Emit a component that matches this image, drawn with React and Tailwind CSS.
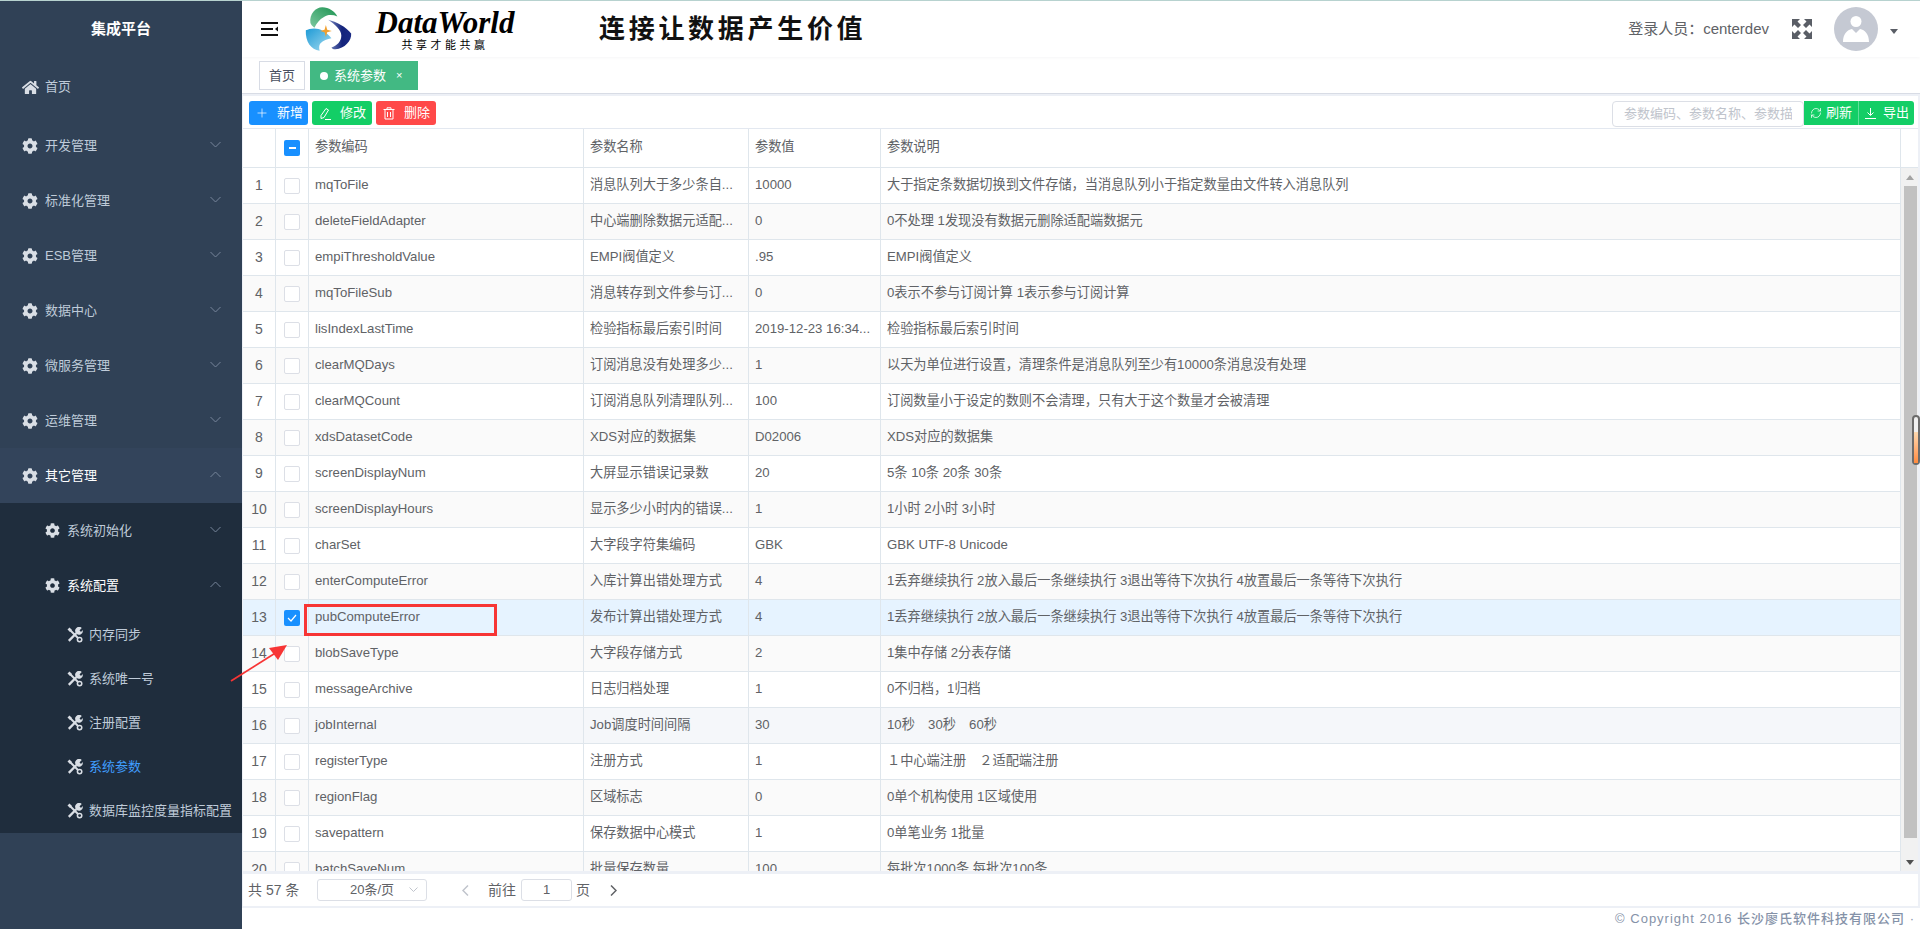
import React from "react";
import { FaCog, FaHome } from "react-icons/fa";
import { Plus, RefreshCw } from "lucide-react";

const rows = [
  ["mqToFile", "消息队列大于多少条自...", "10000", "大于指定条数据切换到文件存储，当消息队列小于指定数量由文件转入消息队列"],
  ["deleteFieldAdapter", "中心端删除数据元适配...", "0", "0不处理 1发现没有数据元删除适配端数据元"],
  ["empiThresholdValue", "EMPI阀值定义", ".95", "EMPI阀值定义"],
  ["mqToFileSub", "消息转存到文件参与订...", "0", "0表示不参与订阅计算 1表示参与订阅计算"],
  ["lisIndexLastTime", "检验指标最后索引时间", "2019-12-23 16:34...", "检验指标最后索引时间"],
  ["clearMQDays", "订阅消息没有处理多少...", "1", "以天为单位进行设置，清理条件是消息队列至少有10000条消息没有处理"],
  ["clearMQCount", "订阅消息队列清理队列...", "100", "订阅数量小于设定的数则不会清理，只有大于这个数量才会被清理"],
  ["xdsDatasetCode", "XDS对应的数据集", "D02006", "XDS对应的数据集"],
  ["screenDisplayNum", "大屏显示错误记录数", "20", "5条 10条 20条 30条"],
  ["screenDisplayHours", "显示多少小时内的错误...", "1", "1小时 2小时 3小时"],
  ["charSet", "大字段字符集编码", "GBK", "GBK UTF-8 Unicode"],
  ["enterComputeError", "入库计算出错处理方式", "4", "1丢弃继续执行 2放入最后一条继续执行 3退出等待下次执行 4放置最后一条等待下次执行"],
  ["pubComputeError", "发布计算出错处理方式", "4", "1丢弃继续执行 2放入最后一条继续执行 3退出等待下次执行 4放置最后一条等待下次执行"],
  ["blobSaveType", "大字段存储方式", "2", "1集中存储 2分表存储"],
  ["messageArchive", "日志归档处理", "1", "0不归档，1归档"],
  ["jobInternal", "Job调度时间间隔", "30", "10秒　30秒　60秒"],
  ["registerType", "注册方式", "1", "１中心端注册　２适配端注册"],
  ["regionFlag", "区域标志", "0", "0单个机构使用 1区域使用"],
  ["savepattern", "保存数据中心模式", "1", "0单笔业务 1批量"],
  ["batchSaveNum", "批量保存数量", "100", "每批次1000条 每批次100条"],
];

const Chevron = ({ up }) => (
  <svg width="11" height="7" viewBox="0 0 11 7" fill="none" stroke="#77859a" strokeWidth="1" className="absolute left-[210px] top-1/2 -mt-[5px]">
    <polyline points={up ? "0.5,6 5.5,1 10.5,6" : "0.5,1 5.5,6 10.5,1"} />
  </svg>
);

const ToolsIcon = () => (
  <svg width="16" height="16" viewBox="0 0 16 16" className="mr-[6px] shrink-0" fill="none" stroke="#d9dee5">
    <line x1="3" y1="3" x2="11" y2="11" strokeWidth="2" />
    <path d="M0.5 2.5L2.5 0.5L5 3L3 5Z" fill="#d9dee5" stroke="none" />
    <circle cx="12.6" cy="12.6" r="2.2" strokeWidth="1.5" />
    <line x1="9.5" y1="6" x2="1.8" y2="13.8" strokeWidth="2.4" />
    <path d="M14.8 1L12.6 3.2L13.2 4.4L14.6 4.6L15.6 3A3.6 3.6 0 0 1 9.4 6.4A3.6 3.6 0 0 1 14.8 1Z" fill="#d9dee5" stroke="none" />
  </svg>
);

const MenuItem = ({ label, up, active }) => (
  <div className={`relative flex h-[55px] items-center pl-[22px] ${active ? "bg-[#33445b] text-white" : "text-[#bfcbd9]"}`}>
    <FaCog className="mr-[7px] w-[16px] h-[16px] text-[#d9dee5]" />
    <span>{label}</span>
    <Chevron up={up} />
  </div>
);

const SubMenu = ({ label, up, active }) => (
  <div className={`relative flex h-[55px] items-center pl-[45px] ${active ? "text-white" : "text-[#bfcbd9]"}`}>
    <FaCog className="mr-[7px] w-[15px] h-[15px] text-[#d9dee5]" />
    <span>{label}</span>
    <Chevron up={up} />
  </div>
);

const Leaf = ({ label, active }) => (
  <div className={`flex h-[44px] items-center pl-[67px] ${active ? "text-[#409eff]" : "text-[#bfcbd9]"}`}>
    <ToolsIcon />
    <span className="whitespace-nowrap">{label}</span>
  </div>
);

const Sidebar = () => (
  <div className="w-[242px] shrink-0 bg-[#304156] text-[13px]">
    <div className="flex h-[57px] items-center justify-center text-[15px] font-bold text-white">集成平台</div>
    <div className="flex h-[58px] items-center pl-[22px] text-[#bfcbd9] mb-[2px]">
      <FaHome className="mr-[6px] w-[17px] h-[17px] text-[#d9dee5]" />
      <span>首页</span>
    </div>
    <MenuItem label="开发管理" />
    <MenuItem label="标准化管理" />
    <MenuItem label="ESB管理" />
    <MenuItem label="数据中心" />
    <MenuItem label="微服务管理" />
    <MenuItem label="运维管理" />
    <MenuItem label="其它管理" up active />
    <div className="bg-[#1f2d3d]">
      <SubMenu label="系统初始化" />
      <SubMenu label="系统配置" up active />
      <Leaf label="内存同步" />
      <Leaf label="系统唯一号" />
      <Leaf label="注册配置" />
      <Leaf label="系统参数" active />
      <Leaf label="数据库监控度量指标配置" />
    </div>
  </div>
);

const Logo = () => (
  <svg width="47" height="46" viewBox="30 10 142 140">
    <defs>
      <linearGradient id="g1" x1="0" y1="1" x2="1" y2="0">
        <stop offset="0" stopColor="#7cc8a0" />
        <stop offset="1" stopColor="#1c9350" />
      </linearGradient>
      <linearGradient id="g2" x1="0" y1="0" x2="1" y2="1">
        <stop offset="0" stopColor="#1d9ad6" />
        <stop offset="1" stopColor="#a6dcf0" />
      </linearGradient>
      <linearGradient id="g3" x1="0" y1="0" x2="1" y2="0">
        <stop offset="0" stopColor="#7f8fc4" />
        <stop offset="0.6" stopColor="#14247c" />
        <stop offset="1" stopColor="#1a2a84" />
      </linearGradient>
    </defs>
    <path d="M46 62C42 34 62 14 82 14c20 0 38 12 46 28c-14-6-30-6-42 2c-12 7-20 16-28 32c-6-4-10-8-12-14Z" fill="url(#g1)" />
    <path d="M32 84c12-6 34-10 52 2c10 6 20 14 26 22c-12 2-26 6-34 16c-4 6-4 14-2 22C48 144 30 118 32 84Z" fill="url(#g2)" />
    <path d="M100 52c24 6 56 22 70 42c2 22-20 46-48 48c-6 0-10-2-12-6c16-4 30-18 30-36c0-18-20-34-40-48Z" fill="url(#g3)" />
    <path d="M93 68l4 14l14 4l-14 4l-4 14l-4-14l-14-4l14-4Z" fill="#f0a030" />
  </svg>
);

const Header = () => (
  <div className="relative z-10 flex h-[56px] shrink-0 items-center bg-white pl-[18px] pr-[22px] shadow-[0_1px_3px_rgba(0,21,41,0.04)]">
    <svg width="18" height="16" viewBox="0 0 18 16" fill="none" stroke="#111" strokeWidth="2">
      <line x1="1" y1="2" x2="18" y2="2" />
      <line x1="1" y1="8" x2="13" y2="8" />
      <line x1="1" y1="14" x2="18" y2="14" />
      <path d="M18 5.5L15 8L18 10.5Z" fill="#111" stroke="none" />
    </svg>
    <div className="ml-[27px]">
      <Logo />
    </div>
    <div className="ml-[22px] flex w-[142px] flex-col items-center text-black">
      <span className="font-['Liberation_Serif','Noto_Sans_CJK_SC',serif] text-[31px] leading-[31px] font-bold italic whitespace-nowrap">DataWorld</span>
      <span className="mt-[1px] text-[11px] leading-[13px] tracking-[3.5px] whitespace-nowrap">共享才能共赢</span>
    </div>
    <div className="ml-[83px] text-[26px] leading-[30px] font-bold tracking-[3.7px] text-[#111] whitespace-nowrap">连接让数据产生价值</div>
    <div className="ml-auto flex items-center">
      <span className="text-[15px] text-[#606266]">登录人员：centerdev</span>
      <svg width="20" height="20" viewBox="0 0 20 20" fill="#5a5e66" className="ml-[23px]">
        <path d="M0 0H8L5.5 2.5L9 6L6 9L2.5 5.5L0 8Z" />
        <path d="M20 0H12L14.5 2.5L11 6L14 9L17.5 5.5L20 8Z" />
        <path d="M0 20H8L5.5 17.5L9 14L6 11L2.5 14.5L0 12Z" />
        <path d="M20 20H12L14.5 17.5L11 14L14 11L17.5 14.5L20 12Z" />
      </svg>
      <div className="ml-[22px] flex h-[44px] w-[44px] items-center justify-center rounded-full bg-[#c5c9d3]">
        <svg width="26" height="28" viewBox="0 0 26 28" fill="#fff">
          <circle cx="13" cy="6.5" r="5.5" />
          <path d="M0 27C0 19 4 15 9 14L13 18L17 14C22 15 26 19 26 27Z" />
        </svg>
      </div>
      <svg width="8" height="5" viewBox="0 0 8 5" fill="#5a5e66" className="ml-[12px] mt-[5px]">
        <path d="M0 0H8L4 5Z" />
      </svg>
    </div>
  </div>
);

const Tabs = () => (
  <div className="flex h-[37px] shrink-0 items-start border-b border-[#d8dce5] bg-white pl-[17px] pt-[4px] text-[13px]">
    <div className="flex h-[29px] w-[46px] items-center justify-center border border-[#d8dce5] text-[#495060]">首页</div>
    <div className="ml-[5px] flex h-[29px] w-[108px] items-center bg-[#42b983] pl-[10px] text-white">
      <span className="h-[8px] w-[8px] rounded-full bg-white" />
      <span className="ml-[6px]">系统参数</span>
      <span className="ml-[10px] text-[11px]">×</span>
    </div>
  </div>
);

const ToolButton = ({ color, icon, label, width }) => (
  <div className={`flex h-[24px] items-center rounded-[3px] pl-[6px] text-[13px] text-white ${color} ${width}`}>
    <span className="flex w-[14px] items-center justify-center">{icon}</span>
    <span className="ml-[8px]">{label}</span>
  </div>
);

const Toolbar = () => (
  <div className="ml-[1px] mr-[2px] flex h-[33px] shrink-0 items-start border-b border-[#e3e8f0] bg-white pl-[6px] pt-[5px]">
    <div className="flex gap-[4px]">
      <ToolButton color="bg-[#1890ff]" width="w-[59px]" label="新增" icon={<Plus size={14} strokeWidth={1.2} />} />
      <ToolButton
        color="bg-[#13ce66]"
        width="w-[60px]"
        label="修改"
        icon={
          <svg width="12" height="13" viewBox="0 0 12 13" fill="none" stroke="#fff" strokeWidth="1">
            <path d="M2 8.5L7 1.5L9.5 3L5 10.5L2 11.5Z" />
            <line x1="6" y1="12.5" x2="12" y2="12.5" />
          </svg>
        }
      />
      <ToolButton
        color="bg-[#ff4949]"
        width="w-[60px]"
        label="删除"
        icon={
          <svg width="12" height="13" viewBox="0 0 12 13" fill="none" stroke="#fff" strokeWidth="1">
            <line x1="0.5" y1="2.5" x2="11.5" y2="2.5" />
            <path d="M4 2.5V0.8H8V2.5" />
            <path d="M2 2.5V12H10V2.5" />
            <line x1="4.5" y1="5" x2="4.5" y2="10" />
            <line x1="7.5" y1="5" x2="7.5" y2="10" />
          </svg>
        }
      />
    </div>
    <div className="ml-auto flex mr-[4px]">
      <div className="h-[26px] w-[192px] overflow-hidden rounded-[4px] border border-[#dcdfe6] pl-[11px] pr-[11px] text-[13px] leading-[24px] whitespace-nowrap text-[#c0c4cc]">
        <div className="overflow-hidden">参数编码、参数名称、参数描述</div>
      </div>
      <div className="flex h-[24px] items-center bg-[#13ce66] rounded-r-[3px] text-[13px] text-white">
        <div className="flex h-[24px] w-[55px] items-center border-r border-[#5fe09a] pl-[6px]">
          <RefreshCw size={12} strokeWidth={1.5} />
          <span className="ml-[4px]">刷新</span>
        </div>
        <div className="flex h-[24px] w-[55px] items-center pl-[6px]">
          <svg width="11" height="11" viewBox="0 0 11 11" fill="none" stroke="#fff" strokeWidth="1">
            <line x1="5.5" y1="0" x2="5.5" y2="7" />
            <polyline points="2.5,4.5 5.5,7.5 8.5,4.5" />
            <line x1="0" y1="10.5" x2="11" y2="10.5" />
          </svg>
          <span className="ml-[7px]">导出</span>
        </div>
      </div>
    </div>
  </div>
);

const Checkbox = ({ state }) => {
  if (state === "some")
    return (
      <span className="flex h-[16px] w-[16px] items-center justify-center rounded-[2px] bg-[#1890ff]">
        <span className="h-[2px] w-[7px] bg-white" />
      </span>
    );
  if (state === "on")
    return (
      <span className="flex h-[16px] w-[16px] items-center justify-center rounded-[2px] bg-[#1890ff]">
        <svg width="10" height="8" viewBox="0 0 10 8" fill="none" stroke="#fff" strokeWidth="1.2">
          <polyline points="1,4 4,7 9,1" />
        </svg>
      </span>
    );
  return <span className="h-[16px] w-[16px] rounded-[2px] border border-[#dcdfe6] bg-white" />;
};

const cell = "flex items-center border-r border-[#dfe6ec] shrink-0 px-[6px] overflow-hidden whitespace-nowrap";

const Row = ({ row, index }) => {
  const n = index + 1;
  let bg = n % 2 === 0 ? "bg-[#fafafa]" : "bg-white";
  if (n === 13) bg = "bg-[#e6f3ff]";
  if (n === 16) bg = "bg-[#f5f7fa]";
  return (
    <div className={`flex h-[36px] shrink-0 border-b border-[#dfe6ec] ${bg}`}>
      <div className="flex w-[33px] shrink-0 items-center justify-center border-r border-[#dfe6ec] pb-[1px] text-[14px]">{n}</div>
      <div className="flex w-[33px] shrink-0 items-center justify-center border-r border-[#dfe6ec]">
        <Checkbox state={n === 13 ? "on" : "off"} />
      </div>
      <div className={`${cell} pb-[1px] w-[275px]`}>{row[0]}</div>
      <div className={`${cell} pb-[1px] w-[165px]`}>{row[1]}</div>
      <div className={`${cell} pb-[1px] w-[132px]`}>{row[2]}</div>
      <div className="flex flex-1 items-center overflow-hidden px-[6px] pb-[1px] whitespace-nowrap">{row[3]}</div>
    </div>
  );
};

const DataTable = () => (
  <div className="ml-[1px] mr-[2px] flex min-h-0 flex-1 flex-col bg-white text-[13.2px] text-[#606266]">
    <div className="flex h-[39px] shrink-0 border-b border-[#dfe6ec]">
      <div className="w-[33px] shrink-0 border-r border-[#dfe6ec]" />
      <div className="flex w-[33px] shrink-0 items-center justify-center border-r border-[#dfe6ec]">
        <Checkbox state="some" />
      </div>
      <div className={`${cell} pb-[2px] w-[275px]`}>参数编码</div>
      <div className={`${cell} pb-[2px] w-[165px]`}>参数名称</div>
      <div className={`${cell} pb-[2px] w-[132px]`}>参数值</div>
      <div className={`${cell} pb-[2px] w-[1020px]`}>参数说明</div>
    </div>
    <div className="flex min-h-0 flex-1">
      <div className="flex w-[1658px] shrink-0 flex-col overflow-hidden border-r border-[#dfe6ec]">
        {rows.map((row, i) => (
          <Row key={row[0]} row={row} index={i} />
        ))}
      </div>
      <div className="flex flex-1 flex-col items-center bg-[#f1f1f1] pl-[1px]">
        <div className="flex h-[18px] items-center">
          <svg width="8" height="5" viewBox="0 0 8 5" fill="#a3a3a3">
            <path d="M4 0L8 5H0Z" />
          </svg>
        </div>
        <div className="h-[652px] w-[13px] bg-[#c1c1c1]" />
        <div className="mt-auto flex h-[18px] items-center">
          <svg width="8" height="5" viewBox="0 0 8 5" fill="#505050">
            <path d="M0 0H8L4 5Z" />
          </svg>
        </div>
      </div>
    </div>
  </div>
);

const Pagination = () => (
  <div className="ml-[1px] mr-[2px] mt-[3px] flex h-[32px] shrink-0 items-center bg-white pl-[5px] text-[14px] text-[#606266]">
    <span className="w-[52px] whitespace-nowrap">共 57 条</span>
    <div className="relative ml-[17px] flex h-[22px] w-[110px] items-center justify-center rounded-[3px] border border-[#dcdfe6] text-[13px]">
      <span>20条/页</span>
      <svg width="9" height="5" viewBox="0 0 9 5" fill="none" stroke="#c0c4cc" className="absolute right-[8px] top-[7px]">
        <polyline points="0.5,0.5 4.5,4.5 8.5,0.5" />
      </svg>
    </div>
    <svg width="7" height="11" viewBox="0 0 7 11" fill="none" stroke="#c0c4cc" strokeWidth="1.5" className="ml-[35px]">
      <polyline points="6,0.5 1,5.5 6,10.5" />
    </svg>
    <span className="ml-[19px]">前往</span>
    <div className="ml-[5px] flex h-[22px] w-[51px] items-center justify-center rounded-[3px] border border-[#dcdfe6] text-[13px]">1</div>
    <span className="ml-[4px]">页</span>
    <svg width="7" height="11" viewBox="0 0 7 11" fill="none" stroke="#606266" strokeWidth="1.5" className="ml-[20px]">
      <polyline points="1,0.5 6,5.5 1,10.5" />
    </svg>
  </div>
);

// annotations somebody drew over the screenshot
const Annotations = () => (
  <>
    <div className="absolute left-[304px] top-[603px] h-[32px] w-[193px] border-[3px] border-[#f73535]" />
    <svg width="70" height="50" viewBox="0 0 70 50" className="absolute left-[225px] top-[638px]">
      <line x1="6" y1="42" x2="52" y2="13" stroke="#f73535" strokeWidth="1.8" />
      <path d="M62 6L44 9L53 21Z" fill="#f73535" />
    </svg>
    <div className="absolute left-[1912px] top-[414px] flex h-[50px] w-[8px] flex-col justify-end rounded-[4px] border-2 border-[#6b6b6b] bg-[#f0f0f0]">
      <div className="h-[31px] w-full bg-gradient-to-b from-[#fcd9b0] to-[#ff8a3c]" />
    </div>
  </>
);

export default function App() {
  return (
    <div className="relative h-[929px] w-[1920px] overflow-hidden border-t border-[#b7d2cf] font-['Liberation_Sans','Noto_Sans_CJK_SC',sans-serif]">
      <div className="flex h-[928px]">
        <Sidebar />
        <div className="flex min-w-0 flex-1 flex-col bg-[#edf0f6]">
          <Header />
          <Tabs />
          <div className="h-[2px] shrink-0" />
          <Toolbar />
          <DataTable />
          <Pagination />
          <div className="mt-[2px] flex h-[21px] shrink-0 items-center justify-end bg-white pr-[5px] text-[13px] font-medium tracking-[1px] whitespace-nowrap text-[#8592a8]">
            © Copyright 2016 长沙廖氏软件科技有限公司 ·
          </div>
        </div>
      </div>
      <Annotations />
    </div>
  );
}
